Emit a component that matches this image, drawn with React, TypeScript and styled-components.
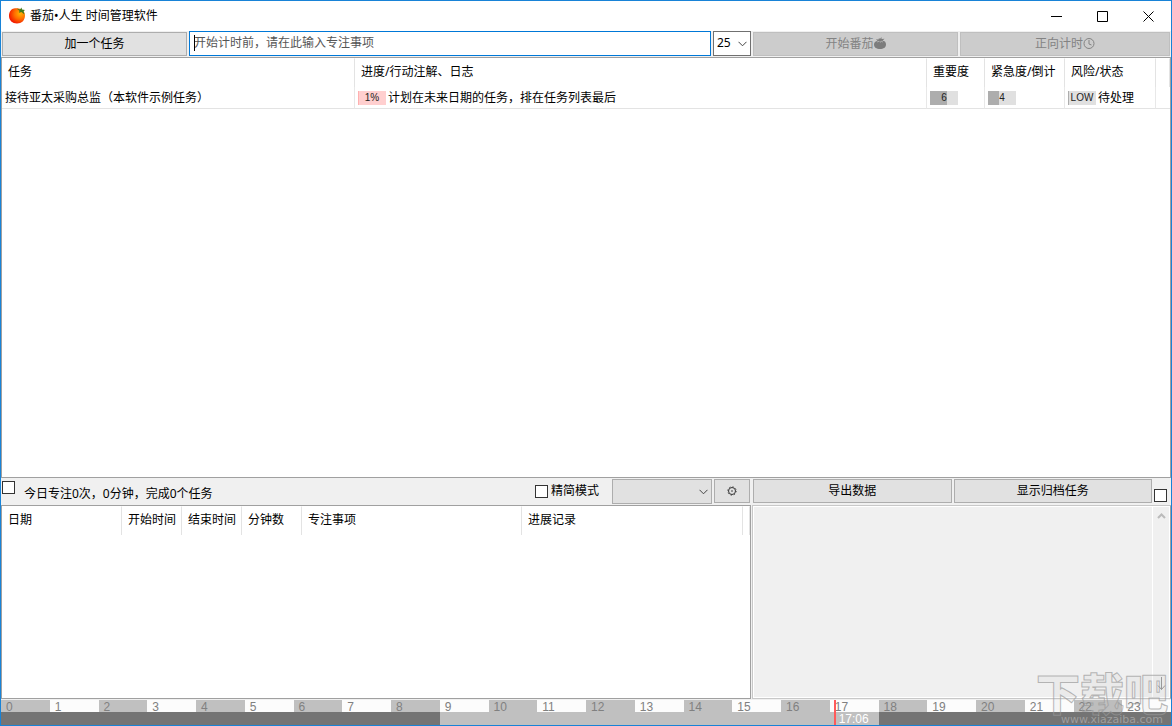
import React from "react";
import styled, { createGlobalStyle, css } from "styled-components";

const Global = createGlobalStyle`
  * { box-sizing: border-box; }
  html, body { margin: 0; }
  body, button, input, select, textarea, table {
    font-family: "Noto Sans", "Noto Sans CJK SC", sans-serif;
    font-size: 12px;
    line-height: 16px;
    color: #000;
  }
`;

const Window = styled.div`
  display: flex;
  flex-direction: column;
  min-height: 100vh;
  border: 1px solid #1883d7;
  background: #f0f0f0;
  position: relative;
  overflow: hidden;
`;

const TitleBar = styled.header`
  display: flex;
  align-items: center;
  height: 30px;
  padding-left: 7px;
  background: #fff;
`;

const Title = styled.h1`
  margin: 0 auto 0 4px;
  font-size: 12px;
  font-weight: 400;
  line-height: 16px;
`;

const CaptionButton = styled.button`
  display: grid;
  place-items: center;
  width: 46px;
  height: 28px;
  padding: 0;
  border: 0;
  background: transparent;
`;

const Toolbar = styled.form`
  display: grid;
  grid-template-columns: 185fr 522fr 38px 205fr 210fr;
  gap: 2px;
  align-items: center;
  height: 26px;
  padding: 0 1px;
`;

const Button = styled.button<{ $grow?: boolean }>`
  display: flex;
  align-items: center;
  justify-content: center;
  height: 24px;
  min-width: 36px;
  padding: 0;
  border: 1px solid #adadad;
  background: #e1e1e1;
  white-space: nowrap;
  ${(p) => p.$grow && css`flex: 1 1 0;`}
  &:disabled {
    border-color: #bfbfbf;
    background: #ccc;
    color: #838383;
  }
`;

const FocusInput = styled.input`
  width: 100%;
  height: 25px;
  padding: 0 4px 2px;
  border: 1px solid #0078d7;
  border-radius: 0;
  background: #fff;
  outline: 0;
  &::placeholder { color: #555; opacity: 1; }
`;

const Caret = styled.span`
  position: absolute;
  left: 5px;
  top: 4px;
  width: 1px;
  height: 16px;
  background: #000;
`;

const Field = styled.div`
  display: flex;
  position: relative;
  align-self: start;
`;

const SelectBox = styled.select<{ $muted?: boolean }>`
  appearance: none;
  width: 100%;
  height: 25px;
  padding: 0 3px 2px;
  border: 1px solid ${(p) => (p.$muted ? "#adadad" : "#707070")};
  border-radius: 0;
  background: ${(p) => (p.$muted ? "#e1e1e1" : "#fff")};
`;

const SelectArrow = styled.svg`
  position: absolute;
  right: 4px;
  top: 10px;
  pointer-events: none;
`;

const ListPanel = styled.section<{ $share: number }>`
  flex: ${(p) => p.$share} 1 0;
  min-width: 0;
  border: 1px solid #a0a0a0;
  background: #fff;
`;

const Table = styled.table`
  width: 100%;
  table-layout: fixed;
  border-collapse: separate;
  border-spacing: 0;
`;

const HeadCell = styled.th`
  height: 29px;
  padding: 0 0 2px 6px;
  border-right: 1px solid #e3e3e3;
  border-top: 1px solid #fff;
  font-weight: 400;
  text-align: left;
  white-space: nowrap;
`;

const Cell = styled.td`
  height: 22px;
  padding: 0 0 0 3px;
  border-right: 1px solid #e8e8e8;
  border-bottom: 1px solid #e3e3e3;
  white-space: nowrap;
  &:last-child { border-right: 0; }
`;

const CellLine = styled.div`
  display: flex;
  align-items: center;
  gap: 2px;
`;

const Meter = styled.span<{ $value: number; $fill: string; $track: string }>`
  width: 28px;
  height: 14px;
  flex: none;
  background: linear-gradient(
    to right,
    ${(p) => p.$fill} ${(p) => p.$value}%,
    ${(p) => p.$track} ${(p) => p.$value}%
  );
  font: 10px/14px "Liberation Sans", sans-serif;
  text-align: center;
  color: #222;
`;

const Split = styled.div`
  display: grid;
  grid-template-columns: 750fr 419fr;
  gap: 1px;
`;

const LowerSplit = styled(Split)`
  flex: 194 1 0;
`;

const StatusBar = styled.div`
  display: flex;
  align-items: center;
  gap: 2px;
  height: 27px;
  padding: 0 1px;
`;

const Check = styled.input<{ $place?: "start" | "end" }>`
  appearance: none;
  flex: none;
  width: 13px;
  height: 13px;
  margin: ${(p) => (p.$place ? "3px 0" : "0")};
  border: 1px solid #333;
  background: #fff;
  align-self: ${(p) => (p.$place ? `flex-${p.$place}` : "center")};
  &:checked { background: #333; }
`;

const EndCheck = styled(Check)`
  margin-right: 3px;
`;

const Summary = styled.p`
  margin: 6px auto 0 7px;
  white-space: nowrap;
`;

const CheckLabel = styled.label`
  display: flex;
  align-items: center;
  gap: 3px;
  margin-right: 11px;
  white-space: nowrap;
`;

const ModeField = styled(Field)`
  width: 100px;
  align-self: center;
`;

const NotePanel = styled.section`
  display: grid;
  grid-template-columns: 1fr 17px;
  border: 1px solid #c8c8c8;
  border-right-color: #a0a0a0;
  box-shadow: inset 0 0 0 1px #fff;
  padding: 1px;
`;

const Notes = styled.textarea`
  width: 100%;
  padding: 4px;
  border: 0;
  background: transparent;
  resize: none;
  outline: 0;
`;

const ScrollTrack = styled.div`
  display: flex;
  flex-direction: column;
  align-items: center;
  justify-content: space-between;
  padding: 6px 0;
  border-left: 1px solid #fff;
`;

const Timeline = styled.footer`
  position: relative;
  padding-top: 1px;
  font: 12px/14px "Liberation Sans", sans-serif;
`;

const DayGrid = styled.div`
  display: grid;
  grid-template-columns: repeat(24, 1fr);
`;

const Hour = styled.span`
  height: 12px;
  padding-left: 5px;
  background: #fcfcfc;
  color: #808080;
  &:nth-child(odd) { background: #c0c0c0; }
`;

const WorkTrack = styled(DayGrid)`
  height: 13px;
  background: #747474;
`;

const WorkHours = styled.span`
  grid-column: 10 / 19;
  background: #c0c0c0;
`;

const NowMark = styled.time`
  position: absolute;
  top: 1px;
  bottom: 0;
  padding: 12px 0 0 3px;
  border-left: 2px solid #ff5a5a;
  color: #fff;
`;

const Watermark = styled.svg`
  position: absolute;
  right: 0;
  bottom: 0;
  pointer-events: none;
`;

const Chevron = () => (
  <SelectArrow width="9" height="6" viewBox="0 0 9 6" fill="none" stroke="#444" aria-hidden="true">
    <path d="M.5 .8 4.5 4.8 8.5 .8" />
  </SelectArrow>
);

const TomatoLogo = () => (
  <svg width="18" height="18" viewBox="0 0 18 18" aria-hidden="true">
    <defs>
      <radialGradient id="skin" cx=".7" cy=".35" r=".75">
        <stop offset="0" stopColor="#ffb400" />
        <stop offset=".5" stopColor="#ff6a00" />
        <stop offset="1" stopColor="#f01000" />
      </radialGradient>
    </defs>
    <path d="M6 1.500C9 .8 17 1.500 17 8.500c0 5-3.500 8-8 8S1 13.500 1 9C1 5 3 2 6 1.500Z" fill="url(#skin)" />
    <path d="M8.500 1.500 12 2.500 13.500 .5 14 2.500 17 3 15.500 4.200 16.500 7.500 13.500 5 11 5.800 11.500 3.800Z" fill="#3f7a1c" />
  </svg>
);

const TomatoGlyph = () => (
  <svg width="12" height="14" viewBox="0 0 12 14" fill="#7c7c7c" aria-hidden="true">
    <path d="M0 7.500C0 5 1.500 4 3.500 3.900L2 2.300 4.500 2.600 5 1 6 2 7.400 0 7.600 2 10.500 1.800 8.500 3.800C10.800 4 12 5.200 12 7.500 12 10.500 9.500 12 6 12S0 10.500 0 7.500Z" />
    <path d="M3 5 5 4.300 6 5.300 7.200 4.300 9 5" fill="none" stroke="#ccc" strokeWidth=".6" />
  </svg>
);

const ClockGlyph = () => (
  <svg width="12" height="14" viewBox="0 0 12 14" fill="none" stroke="#838383" aria-hidden="true">
    <circle cx="6" cy="6.500" r="5" />
    <path d="M6 3V7L8.500 8" />
  </svg>
);

const GearGlyph = () => (
  <svg width="10" height="10" viewBox="0 0 10 10" fill="none" stroke="#333" aria-hidden="true">
    <circle cx="5" cy="5" r="3.500" />
    <circle cx="5" cy="5" r="4.300" strokeWidth=".8" strokeDasharray="1.300 2.077" />
    <circle cx="5" cy="5" r=".8" fill="#333" stroke="none" />
  </svg>
);

const Columns = ({ widths }: { widths: (number | null)[] }) => (
  <colgroup>
    {widths.map((w, i) => (
      <col key={i} width={w ?? undefined} />
    ))}
  </colgroup>
);

const HeadRow = ({ labels }: { labels: string[] }) => (
  <thead>
    <tr>
      {labels.map((label) => (
        <HeadCell key={label} scope="col">{label}</HeadCell>
      ))}
      <HeadCell as="td" />
    </tr>
  </thead>
);

const hours = Array.from({ length: 24 }, (_, h) => h);
const now = { label: "17:06", share: 17.08 / 24 };

export default function App() {
  return (
    <>
      <Global />
      <Window>
        <TitleBar>
          <TomatoLogo />
          <Title>番茄•人生 时间管理软件</Title>
          <CaptionButton aria-label="最小化">
            <svg width="11" height="11" stroke="#000"><path d="M0 5.500H11" /></svg>
          </CaptionButton>
          <CaptionButton aria-label="最大化">
            <svg width="11" height="11" stroke="#000" fill="none"><path d="M.5 .5H10.500V10.500H.5Z" /></svg>
          </CaptionButton>
          <CaptionButton aria-label="关闭">
            <svg width="11" height="11" stroke="#000"><path d="M.5 .5 10.500 10.500M10.500 .5 .5 10.500" /></svg>
          </CaptionButton>
        </TitleBar>

        <Toolbar onSubmit={(e) => e.preventDefault()}>
          <Button type="button">加一个任务</Button>
          <Field>
            <FocusInput aria-label="专注事项" placeholder="开始计时前，请在此输入专注事项" />
            <Caret />
          </Field>
          <Field>
            <SelectBox aria-label="分钟数" defaultValue="25">
              <option>25</option>
            </SelectBox>
            <Chevron />
          </Field>
          <Button type="button" disabled>开始番茄<TomatoGlyph /></Button>
          <Button type="button" disabled>正向计时<ClockGlyph /></Button>
        </Toolbar>

        <ListPanel $share={418}>
          <Table>
            <Columns widths={[353, null, 58, 80, 91, 14]} />
            <HeadRow labels={["任务", "进度/行动注解、日志", "重要度", "紧急度/倒计", "风险/状态"]} />
            <tbody>
              <tr>
                <Cell>接待亚太采购总监（本软件示例任务）</Cell>
                <Cell>
                  <CellLine>
                    <Meter $value={3} $fill="#ffb0b0" $track="#ffcfcf">1%</Meter>
                    计划在未来日期的任务，排在任务列表最后
                  </CellLine>
                </Cell>
                <Cell><CellLine><Meter $value={60} $fill="#adadad" $track="#e0e0e0">6</Meter></CellLine></Cell>
                <Cell><CellLine><Meter $value={40} $fill="#adadad" $track="#e0e0e0">4</Meter></CellLine></Cell>
                <Cell><CellLine><Meter $value={3} $fill="#adadad" $track="#e0e0e0">LOW</Meter>待处理</CellLine></Cell>
                <Cell />
              </tr>
            </tbody>
          </Table>
        </ListPanel>

        <Split>
          <StatusBar>
            <Check type="checkbox" aria-label="今日" $place="start" />
            <Summary>今日专注0次，0分钟，完成0个任务</Summary>
            <CheckLabel>
              <Check type="checkbox" />
              精简模式
            </CheckLabel>
            <ModeField>
              <SelectBox aria-label="模式" $muted />
              <Chevron />
            </ModeField>
            <Button type="button" aria-label="设置"><GearGlyph /></Button>
          </StatusBar>
          <StatusBar>
            <Button type="button" $grow>导出数据</Button>
            <Button type="button" $grow>显示归档任务</Button>
            <EndCheck type="checkbox" aria-label="归档" $place="end" />
          </StatusBar>
        </Split>

        <LowerSplit>
          <ListPanel $share={1}>
            <Table>
              <Columns widths={[120, 60, 60, 60, 220, 221, null]} />
              <HeadRow labels={["日期", "开始时间", "结束时间", "分钟数", "专注事项", "进展记录"]} />
            </Table>
          </ListPanel>
          <NotePanel>
            <Notes readOnly aria-label="日志" />
            <ScrollTrack>
              <svg width="9" height="6" fill="none" stroke="#bbb" strokeWidth="2"><path d="M1 5 4.500 1.500 8 5" /></svg>
              <svg width="9" height="14" fill="none" stroke="#999"><path d="M4.500 0V12.500M1 8.500 4.500 12.500 8 8.500" /></svg>
            </ScrollTrack>
          </NotePanel>
        </LowerSplit>

        <Timeline>
          <DayGrid>
            {hours.map((h) => (
              <Hour key={h}>{h}</Hour>
            ))}
          </DayGrid>
          <WorkTrack><WorkHours /></WorkTrack>
          <NowMark style={{ left: `${now.share * 100}%` }}>{now.label}</NowMark>
        </Timeline>

        <Watermark width="136" height="72" viewBox="0 0 136 72">
          <text x="1" y="58" fontSize="44" fontWeight="900" fontFamily="'Noto Sans CJK SC', sans-serif" fill="#999" fillOpacity=".08" stroke="#999" strokeOpacity=".7">下载吧</text>
          <text x="26" y="70" fontSize="11" fontFamily="'DejaVu Sans', sans-serif" fill="#bbb" fillOpacity=".6">www.xiazaiba.com</text>
        </Watermark>
      </Window>
    </>
  );
}
